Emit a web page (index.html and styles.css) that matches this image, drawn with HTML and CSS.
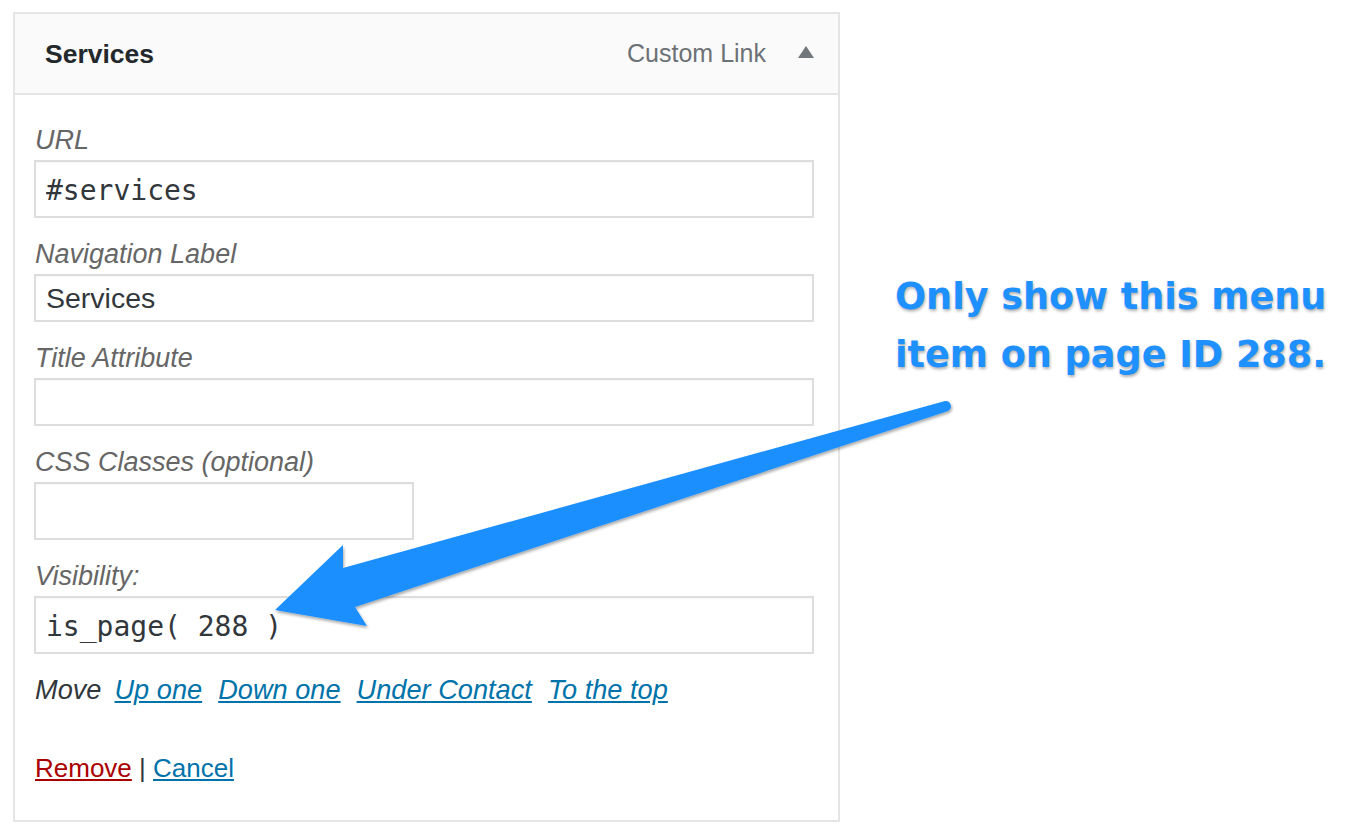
FILE: index.html
```html
<!DOCTYPE html>
<html lang="en">
<head>
  <meta charset="UTF-8">
  <meta name="viewport" content="width=device-width, initial-scale=1.0">
  <title>Menu Item - Services</title>
  <link rel="stylesheet" href="styles.css">
</head>
<body>
  <div class="menu-item">
    <div class="item-bar">
      <span class="item-title">Services</span>
      <span class="item-controls">
        <span class="item-type">Custom Link</span>
        <span class="item-toggle"></span>
      </span>
    </div>

    <div class="item-settings">
      <label class="field-label" for="url">URL</label>
      <input type="text" id="url" class="field code tall" value="#services">

      <label class="field-label" for="navLabel">Navigation Label</label>
      <input type="text" id="navLabel" class="field" value="Services">

      <label class="field-label" for="titleAttr">Title Attribute</label>
      <input type="text" id="titleAttr" class="field">

      <label class="field-label" for="cssClasses">CSS Classes (optional)</label>
      <input type="text" id="cssClasses" class="field tall half">

      <label class="field-label" for="visibility">Visibility:</label>
      <input type="text" id="visibility" class="field code tall" value="is_page( 288 )">

      <div class="move-row">
        <span class="move-label">Move</span>
        <a href="#">Up one</a>
        <a href="#">Down one</a>
        <a href="#">Under Contact</a>
        <a href="#">To the top</a>
      </div>

      <div class="actions">
        <a href="#" class="remove">Remove</a> | <a href="#" class="cancel">Cancel</a>
      </div>
    </div>
  </div>

  <!-- annotation -->
  <div class="callout">Only show this menu<br>item on page ID 288.</div>

  <svg class="arrow" width="1346" height="828" viewBox="0 0 1346 828">
    <defs>
      <filter id="shadow" x="-10%" y="-10%" width="120%" height="130%">
        <feDropShadow dx="1" dy="2" stdDeviation="1.5" flood-color="#000" flood-opacity="0.35"/>
      </filter>
    </defs>
    <path d="M 343 568 L 945 401 A 5.3 5.3 0 0 1 948 411 L 355 607 L 367 626 L 275 610 L 343 545 Z" fill="#1b8fff" filter="url(#shadow)"/>
  </svg>
</body>
</html>
```

FILE: styles.css
```css
body {
  margin: 0;
  background-color: #fff;
  font-family: "Liberation Sans", Arial, sans-serif;
  position: relative;
  width: 1346px;
  height: 828px;
  overflow: hidden;
}

.menu-item {
  margin: 12px 0 0 13px;
  width: 827px;
  border: 2px solid #e5e5e5;
  box-sizing: border-box;
  background-color: #fff;
}

.item-bar {
  display: flex;
  justify-content: space-between;
  align-items: center;
  height: 79px;
  padding: 0 24px 0 30px;
  background-color: #fafafa;
  border-bottom: 2px solid #e5e5e5;
}

.item-title {
  font-size: 26.5px;
  font-weight: bold;
  color: #23282d;
  margin-top: 2px;
}

.item-controls {
  display: flex;
  align-items: center;
}

.item-type {
  font-size: 25px;
  color: #6c7176;
}

.item-toggle {
  width: 0;
  height: 0;
  margin-left: 32px;
  border-left: 8px solid transparent;
  border-right: 8px solid transparent;
  border-bottom: 12px solid #72777c;
  margin-top: -3px;
}

.item-settings {
  padding: 31px 24px 38px 19px;
}

.field-label {
  display: block;
  font-size: 27px;
  font-style: italic;
  line-height: 28px;
  color: #666;
  margin-bottom: 6px;
  padding-left: 1px;
}

.field {
  display: block;
  width: 780px;
  height: 48px;
  margin: 0 0 22px 0;
  padding: 0 10px;
  border: 2px solid #ddd;
  box-shadow: inset 0 1px 2px rgba(0, 0, 0, 0.04);
  box-sizing: border-box;
  font-family: "Liberation Sans", Arial, sans-serif;
  font-size: 28.5px;
  line-height: 40px;
  color: #32373c;
  background-color: #fff;
  outline: none;
}

.field.tall {
  height: 58px;
}

.field.half {
  width: 380px;
}

.field.code {
  font-family: "DejaVu Sans Mono", Menlo, monospace;
  font-size: 28px;
  line-height: 46px;
  padding-top: 2px;
}

.move-row {
  display: flex;
  gap: 16px;
  font-size: 27.2px;
  font-style: italic;
  line-height: 28px;
  color: #32373c;
  padding-left: 1px;
  margin-bottom: 50px;
}

.move-row a {
  color: #0073aa;
}

.move-label {
  margin-right: -3px;
}

.actions {
  font-size: 26px;
  line-height: 28px;
  color: #32373c;
  padding-left: 1px;
}

.actions a.remove {
  color: #a00;
}

.actions a.cancel {
  color: #0073aa;
}

.callout {
  position: absolute;
  left: 895px;
  top: 268px;
  font-family: "DejaVu Sans", Verdana, sans-serif;
  font-size: 36.6px;
  font-weight: bold;
  line-height: 58px;
  color: #1e90ff;
  -webkit-text-stroke: 6px #fff;
  paint-order: stroke fill;
  text-shadow: 1px 2px 3px rgba(0, 0, 0, 0.3);
  white-space: nowrap;
}

.arrow {
  position: absolute;
  left: 0;
  top: 0;
  pointer-events: none;
}
```
